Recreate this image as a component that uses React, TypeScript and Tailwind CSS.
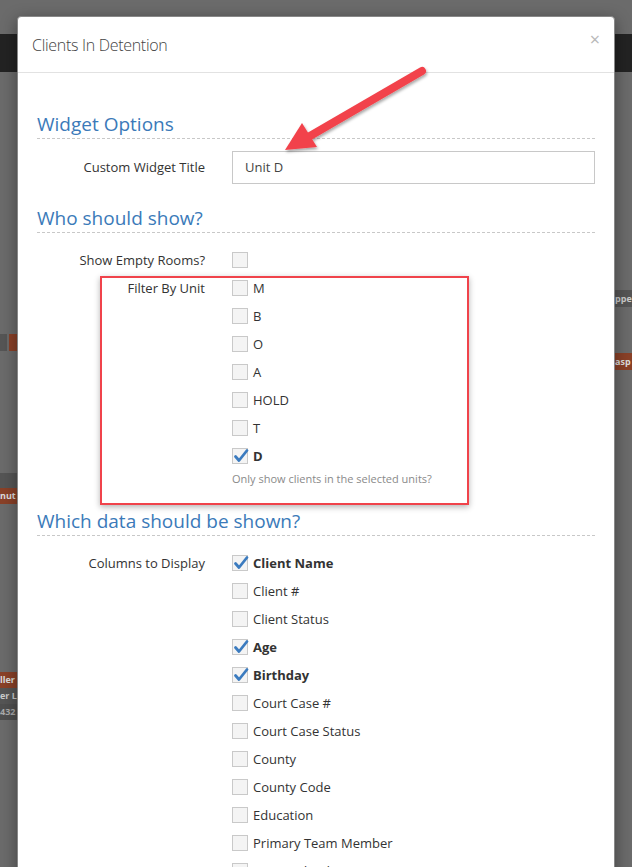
import React from "react";

const font = { fontFamily: '"Open Sans", "Liberation Sans", sans-serif' };

function Box({ checked }: { checked?: boolean }) {
  return (
    <span className="relative flex h-[16px] w-[16px] shrink-0 items-center justify-center border border-[#c9c9c9] bg-[#f4f4f4]">
      {checked && (
        <svg width="16" height="16" viewBox="0 0 16 16" className="absolute left-[0px] top-[-1px]">
          <path d="M2.5 8.5 L6 12.5 L14 2.5" fill="none" stroke="#3b7bbf" strokeWidth="2.8" strokeLinecap="round" strokeLinejoin="round" />
        </svg>
      )}
    </span>
  );
}

function Check({ label, checked }: { label: string; checked?: boolean }) {
  return (
    <div className="flex h-[16px] items-center">
      <Box checked={checked} />
      <span className={"ml-[5px] text-[13px] leading-[16px] text-[#333] " + (checked ? "font-bold" : "")}>{label}</span>
    </div>
  );
}

function Heading({ children, className }: { children: React.ReactNode; className?: string }) {
  return (
    <h3 className={"border-b border-dashed border-[#c8c8c8] pb-[1px] text-[19px] leading-[26px] text-[#3b7ab9] " + (className ?? "")}>
      {children}
    </h3>
  );
}

function Row({ label, children, className }: { label: string; children: React.ReactNode; className?: string }) {
  return (
    <div className={"flex items-start " + (className ?? "")}>
      <div className="w-[168px] shrink-0 text-right text-[13px] leading-[16px] text-[#333]">{label}</div>
      <div className="ml-[27px] flex-1">{children}</div>
    </div>
  );
}

export default function App() {
  const units = ["M", "B", "O", "A", "HOLD", "T"];
  const columns: [string, boolean][] = [
    ["Client Name", true],
    ["Client #", false],
    ["Client Status", false],
    ["Age", true],
    ["Birthday", true],
    ["Court Case #", false],
    ["Court Case Status", false],
    ["County", false],
    ["County Code", false],
    ["Education", false],
    ["Primary Team Member", false],
    ["Assigned Judge", false],
  ];

  return (
    <div className="relative h-[867px] w-[632px] overflow-hidden bg-[#6b6b6b]" style={font}>
      {/* page behind the backdrop */}
      <div className="mt-[34px] h-[38px] w-full bg-[#232323]" />
      <div className="flex justify-between">
        <div className="w-[17px]">
          <div className="mt-[262px] flex h-[17px] gap-[2px]">
            <div className="w-[7px] bg-[#555]" />
            <div className="w-[8px] bg-[#8a4128]" />
          </div>
          <div className="mt-[122px] h-[15px] w-[17px] bg-[#555]" />
          <div className="h-[16px] w-[17px] bg-[#8a4128] text-[9px] font-bold leading-[16px] text-[#ddd]">nut</div>
          <div className="mt-[168px] h-[16px] w-[17px] bg-[#8a4128] text-[9px] font-bold leading-[16px] text-[#ddd]">ller</div>
          <div className="h-[16px] w-[17px] bg-[#555] text-[9px] font-bold leading-[16px] text-[#ccc]">er L</div>
          <div className="h-[16px] w-[17px] bg-[#4f4f4f] text-[9px] font-bold leading-[16px] text-[#aaa]">432</div>
        </div>
        <div className="w-[17px]">
          <div className="mt-[218px] h-[17px] w-[17px] bg-[#555] text-[9px] font-bold leading-[17px] text-[#ccc]">ppe</div>
          <div className="mt-[46px] h-[17px] w-[17px] bg-[#8a4128] text-[9px] font-bold leading-[17px] text-[#ddd]">asp</div>
        </div>
      </div>

      {/* modal */}
      <div className="absolute left-[17px] top-[16px] h-[900px] w-[598px] rounded-t-[4px] border border-[#888] bg-white shadow-[0_4px_16px_rgba(0,0,0,0.4)]">
        <div className="flex h-[56px] items-center justify-between border-b border-[#e2e2e2] pl-[14px] pr-[14px]">
          <span className="text-[16px] font-light tracking-[-0.3px] text-[#444]">Clients In Detention</span>
          <span className="mt-[-12px] text-[18px] leading-none text-[#b8b8b8]">×</span>
        </div>

        <div className="px-[19px] pt-[38px]">
          <Heading>Widget Options</Heading>
          <div className="mt-[12px] flex items-center">
            <div className="w-[168px] shrink-0 text-right text-[13px] text-[#333]">Custom Widget Title</div>
            <div className="ml-[27px] flex h-[33px] flex-1 items-center border border-[#c8c8c8] pl-[12px] text-[13px] text-[#444]">
              Unit D
            </div>
          </div>

          <Heading className="mt-[21px]">Who should show?</Heading>
          <Row label="Show Empty Rooms?" className="mt-[19px]">
            <Box />
          </Row>
          <div className="relative mt-[12px]">
            <Row label="Filter By Unit">
              <div className="flex flex-col gap-[12px]">
                {units.map((u) => (
                  <Check key={u} label={u} />
                ))}
                <Check label="D" checked />
              </div>
              <div className="mt-[7px] text-[11px] leading-[16px] text-[#8a8a8a]">Only show clients in the selected units?</div>
            </Row>
            <div className="pointer-events-none absolute left-[63px] top-[-4px] h-[229px] w-[369px] border-[2px] border-[#f0434b] shadow-[0_2px_6px_rgba(0,0,0,0.3)]" />
          </div>

          <Heading className="mt-[21px]">Which data should be shown?</Heading>
          <Row label="Columns to Display" className="mt-[19px]">
            <div className="flex flex-col gap-[12px]">
              {columns.map(([c, on]) => (
                <Check key={c} label={c} checked={on} />
              ))}
            </div>
          </Row>
        </div>
      </div>

      {/* annotation arrow */}
      <svg className="pointer-events-none absolute left-0 top-0" width="632" height="200" viewBox="0 0 632 200">
        <defs>
          <filter id="sh" x="-20%" y="-20%" width="140%" height="140%">
            <feDropShadow dx="1" dy="2" stdDeviation="1.6" floodColor="#000" floodOpacity="0.35" />
          </filter>
        </defs>
        <g filter="url(#sh)">
          <line x1="422" y1="71" x2="310" y2="136" stroke="#f2434b" strokeWidth="8" strokeLinecap="round" />
          <polygon points="285,150 302,123 317,147" fill="#f2434b" />
        </g>
      </svg>
    </div>
  );
}
